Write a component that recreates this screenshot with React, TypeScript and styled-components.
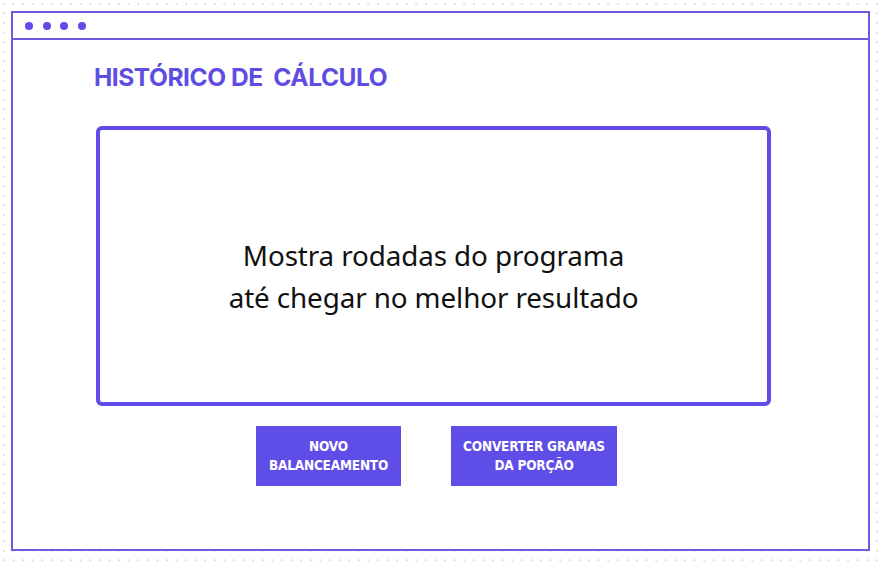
import React from "react";
import styled, { createGlobalStyle } from "styled-components";

const Global = createGlobalStyle`
  html, body { margin: 0; padding: 0; }
  body {
    width: 882px;
    height: 563px;
    background-color: #ffffff;
    background-image: radial-gradient(circle, #dcdce4 0.9px, transparent 1.2px);
    background-size: 9.6px 9.6px;
    background-position: -1px -1px;
    font-family: Inter, "Liberation Sans", sans-serif;
    overflow: hidden;
  }
`;

const Page = styled.div`
  padding: 11px 0 0 11px;
`;

const Frame = styled.div`
  width: 859px;
  height: 540px;
  box-sizing: border-box;
  border: 2px solid #6c5de0;
  background: #ffffff;
  display: flex;
  flex-direction: column;
`;

const TitleBar = styled.div`
  height: 25px;
  border-bottom: 2px solid #6c5de0;
  display: flex;
  align-items: center;
  gap: 9.5px;
  padding: 0 0 0 12px;
  box-sizing: content-box;
`;

const Dot = styled.span`
  width: 8px;
  height: 8px;
  border-radius: 50%;
  background: #5f4de8;
`;

const Body = styled.div`
  display: flex;
  flex-direction: column;
  padding: 22px 0 0 81px;
`;

const Title = styled.h1`
  margin: 0;
  font-family: Inter, "Liberation Sans", sans-serif;
  font-weight: 700;
  font-size: 24.5px;
  letter-spacing: -0.45px;
  color: #5e4de3;
  white-space: pre;
  line-height: 30px;
`;

const Panel = styled.div`
  margin: 34px 0 0 2px;
  width: 675px;
  height: 280px;
  box-sizing: border-box;
  border: 4px solid #5f4be8;
  border-radius: 6px;
  display: flex;
  align-items: center;
  justify-content: center;
`;

const PanelText = styled.p`
  margin: 20px 0 0 0;
  text-align: center;
  font-family: "Noto Sans", "Liberation Sans", sans-serif;
  font-size: 27.8px;
  line-height: 42px;
  color: #111111;
  letter-spacing: -0.1px;
`;

const Actions = styled.div`
  display: flex;
  gap: 50px;
  margin: 20px 0 0 162px;
`;

const Action = styled.button<{ $w: number }>`
  width: ${(p) => p.$w}px;
  height: 60px;
  border: none;
  background: #5f4de8;
  color: #ffffff;
  font-family: "DejaVu Sans Condensed", "Liberation Sans Narrow", sans-serif;
  font-weight: 700;
  font-size: 13.5px;
  line-height: 19px;
  letter-spacing: -0.2px;
  text-align: center;
  padding: 0;
  display: flex;
  align-items: center;
  justify-content: center;
`;

export default function App() {
  return (
    <>
      <Global />
      <Page>
        <Frame>
          <TitleBar>
            <Dot />
            <Dot />
            <Dot />
            <Dot />
          </TitleBar>
          <Body>
            <Title>{"HISTÓRICO DE  CÁLCULO"}</Title>
            <Panel>
              <PanelText>
                Mostra rodadas do programa
                <br />
                até chegar no melhor resultado
              </PanelText>
            </Panel>
            <Actions>
              <Action $w={145}>
                NOVO
                <br />
                BALANCEAMENTO
              </Action>
              <Action $w={166}>
                CONVERTER GRAMAS
                <br />
                DA PORÇÃO
              </Action>
            </Actions>
          </Body>
        </Frame>
      </Page>
    </>
  );
}
